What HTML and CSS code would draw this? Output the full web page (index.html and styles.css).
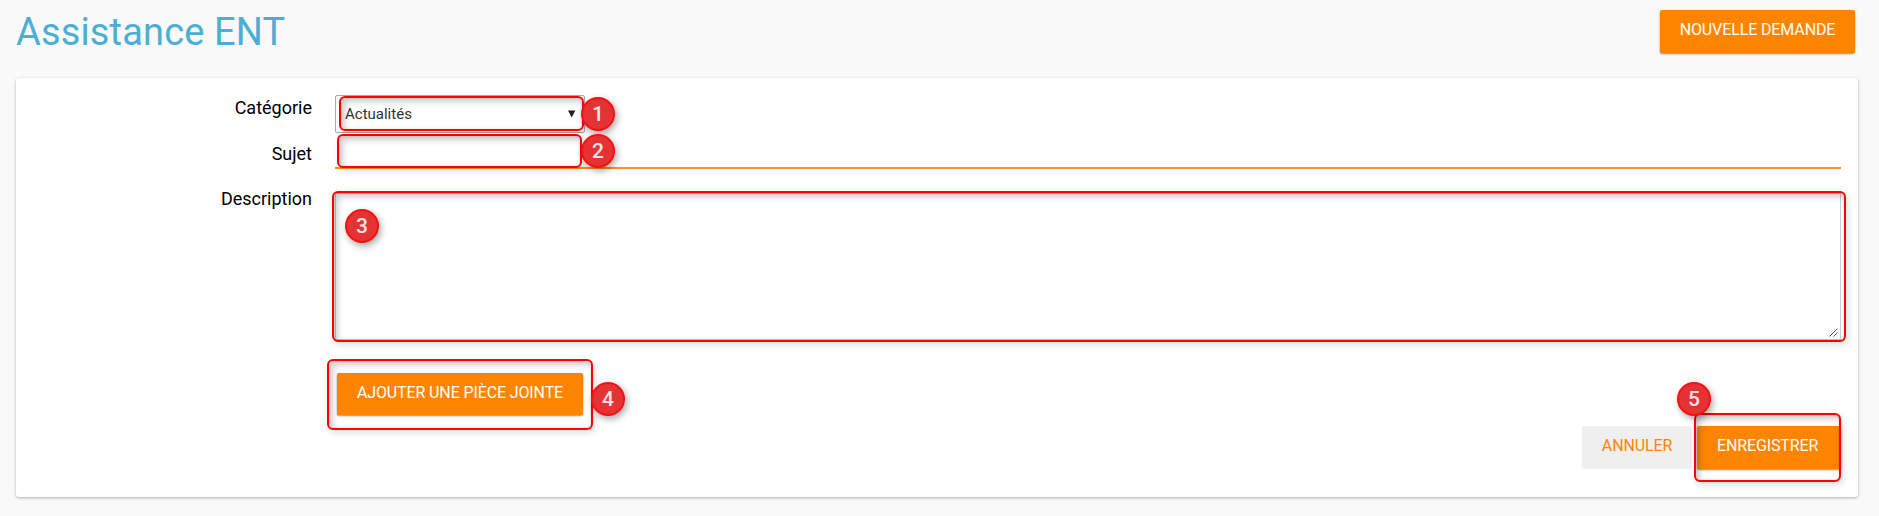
FILE: index.html
```html
<!DOCTYPE html>
<html lang="fr">
<head>
<meta charset="utf-8">
<title>Assistance ENT</title>
<link rel="stylesheet" href="styles.css">
</head>
<body>
<header class="top">
  <h1 class="title">Assistance ENT</h1>
  <button class="btn btn-new">Nouvelle demande</button>
</header>
<main class="card">
  <div class="row row-category">
    <label class="label">Catégorie</label>
    <div class="select"><span>Actualités</span><svg class="arrow" width="8" height="8" viewBox="0 0 8 8"><path d="M0 .5h7.4L3.7 7.5z" fill="#222"/></svg></div>
  </div>
  <div class="row row-subject">
    <label class="label">Sujet</label>
    <input class="input" type="text">
  </div>
  <div class="row row-description">
    <label class="label">Description</label>
    <div class="textarea"><svg class="grip" width="9" height="9" viewBox="0 0 9 9"><path d="M.5 8.5l8-8M4.500 8.500l4-4" stroke="#555" stroke-width="1" fill="none"/></svg></div>
  </div>
  <div class="attach"><button class="btn btn-attach">Ajouter une pièce jointe</button></div>
  <div class="actions">
    <button class="btn btn-cancel">Annuler</button>
    <button class="btn btn-save">Enregistrer</button>
  </div>
</main>
<div class="frame frame-1"></div>
<div class="frame frame-2"></div>
<div class="frame frame-3"></div>
<div class="frame frame-4"></div>
<div class="frame frame-5"></div>
<div class="badge badge-1">1</div>
<div class="badge badge-2">2</div>
<div class="badge badge-3">3</div>
<div class="badge badge-4">4</div>
<div class="badge badge-5">5</div>
</body>
</html>
```

FILE: styles.css
```css
* { box-sizing: border-box; }
body {
  position: relative;
  margin: 0;
  height: 516px;
  overflow: hidden;
  background: #f9f9f9;
  font-family: Roboto, sans-serif;
  color: #000;
}
.top {
  display: flex;
  justify-content: space-between;
  align-items: flex-start;
  height: 78px;
  padding: 10px 24px 0 16px;
}
.title {
  margin: 0;
  font-size: 38px;
  line-height: 44px;
  font-weight: 400;
  letter-spacing: .15px;
  color: #4bafd5;
}
.btn {
  display: block;
  height: 43px;
  margin: 0;
  padding: 0 0 3px;
  border: 0;
  border-radius: 2px;
  background: #ff8500;
  color: #fff;
  font: 400 16px/40px Roboto, sans-serif;
  letter-spacing: -.12px;
  text-transform: uppercase;
  text-align: center;
  white-space: nowrap;
  box-shadow: 0 1px 2px rgba(0, 0, 0, .45);
}
.btn-new { width: 195px; }
.card {
  height: 419px;
  margin: 0 21px 0 16px;
  padding: 17px 17px 0 0;
  background: #fff;
  border-radius: 3px;
  box-shadow: 0 1px 3px rgba(0, 0, 0, .3);
}
.row {
  display: grid;
  grid-template-columns: 296px 1fr;
  column-gap: 23px;
}
.row-category { height: 38px; }
.row-subject { height: 36px; }
.row-description { padding-top: 24px; height: 173px; }
.label {
  text-align: right;
  font-size: 18px;
  line-height: 26px;
}
.row-subject .label { padding-top: 8px; }
.row-description .label { margin-top: -7px; }
.select {
  display: flex;
  align-items: center;
  justify-content: space-between;
  width: 250px;
  height: 38px;
  padding: 0 8px 0 9px;
  border: 1px solid #a9a9a9;
  border-radius: 2px;
  font: 400 15px/20px Roboto, sans-serif;
  color: #333;
}
.input {
  width: 100%;
  height: 36px;
  padding: 0;
  border: 0;
  border-bottom: 2px solid #f7931e;
  background: none;
}
.textarea {
  display: flex;
  justify-content: flex-end;
  align-items: flex-end;
  width: 1506px;
  height: 147px;
  padding: 2px;
  border: 1px solid #ccc;
}
.attach { padding: 31px 0 0 321px; }
.btn-attach { width: 246px; height: 42px; }
.actions {
  display: flex;
  justify-content: flex-end;
  gap: 5px;
  padding-top: 11px;
}
.btn-cancel {
  width: 110px;
  background: #efefef;
  color: #ff8500;
  box-shadow: none;
}
.btn-save { width: 144px; padding-right: 25px; padding-left: 20px; }

/* Numbered callouts laid over the form */
.frame {
  position: absolute;
  border: 2px solid #f00;
  border-radius: 6px;
  box-shadow: 2px 3px 7px rgba(0, 0, 0, .13), inset 4px 4px 6px rgba(0, 0, 0, .19), inset 0 0 3px rgba(0, 0, 0, .12);
}
.frame-1 { left: 339px; top: 96px; width: 245px; height: 35px; }
.frame-2 { left: 337px; top: 134px; width: 245px; height: 34px; }
.frame-3 { left: 332px; top: 191px; width: 1514px; height: 151px; }
.frame-4 { left: 327px; top: 359px; width: 266px; height: 71px; }
.frame-5 { left: 1694px; top: 413px; width: 147px; height: 69px; }
.badge {
  position: absolute;
  width: 34px;
  height: 34px;
  border: 2px solid #fa1010;
  border-radius: 50%;
  background: #e33335;
  color: #ffe3e3;
  font: 500 21px/30px Roboto, sans-serif;
  text-align: center;
  box-shadow: 2px 3px 7px rgba(0, 0, 0, .35);
}
.badge-1 { left: 581px; top: 97px; }
.badge-2 { left: 581px; top: 134px; }
.badge-3 { left: 345px; top: 209px; }
.badge-4 { left: 591px; top: 382px; }
.badge-5 { left: 1677px; top: 382px; }
```
